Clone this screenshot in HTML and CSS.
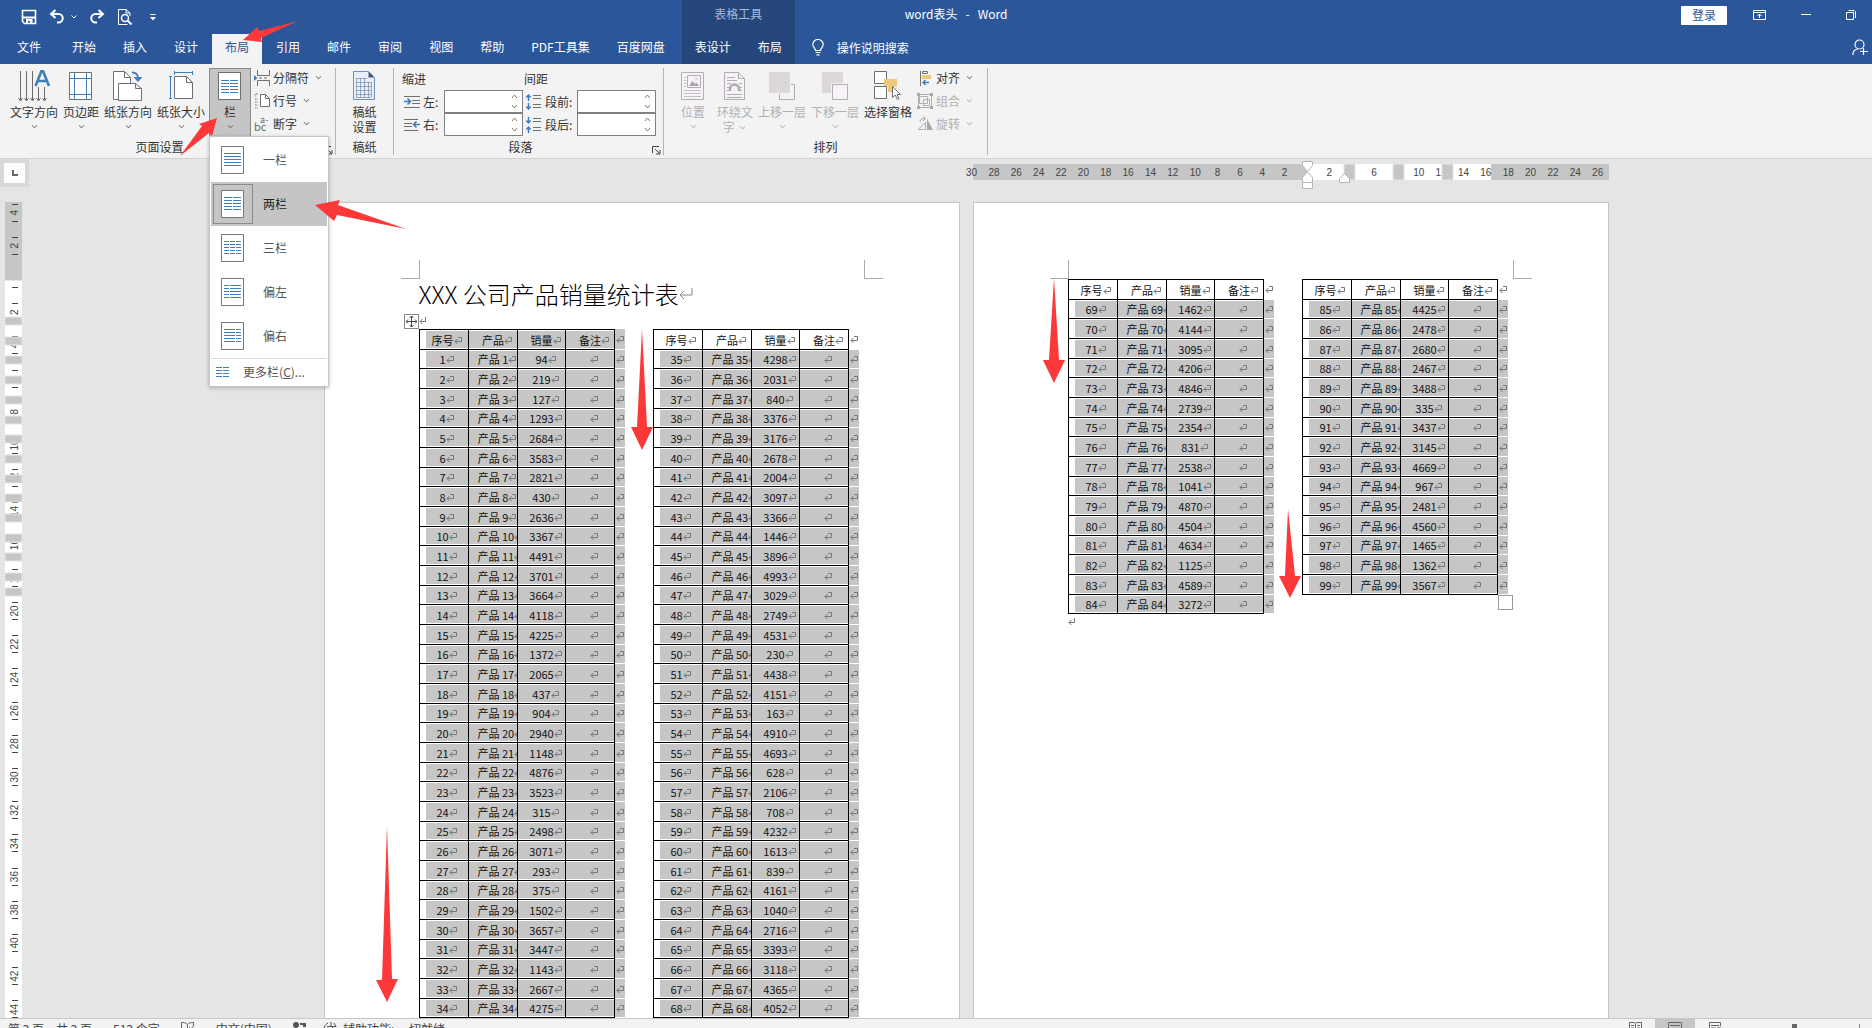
FILE: index.html
```
<!DOCTYPE html>
<html lang="zh-CN">
<head>
    <meta charset="UTF-8">
    <meta name="viewport" content="width=device-width, initial-scale=1.0">
    <title>word表头 - Word</title>
    <link rel="stylesheet" href="styles.css">
</head>
<body>

    <header class="topbar">
        <div class="top-main">
            <div class="quick-access">
                <button aria-label="保存"><svg width="16" height="16" viewBox="0 0 16 16"><path d="M1.5 1.5h13v13h-11l-2-2z" fill="none" stroke="#fff" stroke-width="1.6"/><path d="M2 7.5h12v2H2z" fill="#fff"/><path d="M5 10h6.500v5H9v-3H7v3H5z" fill="#fff"/></svg></button>
                <button class="undo" aria-label="撤消"><svg width="16" height="16" viewBox="0 0 16 16"><path d="M2 5h7.500a4 4 0 0 1 0 8.500H8" fill="none" stroke="#fff" stroke-width="2"/><path d="M6.500 1L2 5l4.500 4" fill="none" stroke="#fff" stroke-width="2"/></svg><svg width="6" height="4" viewBox="0 0 6 4"><path d="M.5.5L3 3 5.500.5" fill="none" stroke="#fff"/></svg></button>
                <button aria-label="恢复"><svg width="16" height="16" viewBox="0 0 16 16"><path d="M14 5H6.500a4 4 0 0 0 0 8.500H8" fill="none" stroke="#fff" stroke-width="2"/><path d="M9.500 1L14 5 9.500 9" fill="none" stroke="#fff" stroke-width="2"/></svg></button>
                <button aria-label="打印预览"><svg width="16" height="18" viewBox="0 0 16 18"><path d="M13 8V5L9 1.500H1.500v15h9M9 1.500V5h4" fill="none" stroke="#fff"/><circle cx="8" cy="10" r="3.500" fill="none" stroke="#fff" stroke-width="1.500"/><path d="M10.500 12.500l4 4" stroke="#fff" stroke-width="2"/></svg></button>
                <button class="more" aria-label="自定义快速访问工具栏"><svg width="6" height="7" viewBox="0 0 6 7"><path d="M.5.500h5" stroke="#fff"/><path d="M0 3h6L3 6.500z" fill="#fff"/></svg></button>
            </div>
            <nav class="tabs">
                <button class="tab file">文件</button>
                <button class="tab">开始</button>
                <button class="tab">插入</button>
                <button class="tab">设计</button>
                <button class="tab active">布局</button>
                <button class="tab">引用</button>
                <button class="tab">邮件</button>
                <button class="tab">审阅</button>
                <button class="tab">视图</button>
                <button class="tab">帮助</button>
                <button class="tab">PDF工具集</button>
                <button class="tab">百度网盘</button>
            </nav>
        </div>
        <div class="top-context">
            <div class="context-title">表格工具</div>
            <nav class="tabs">
                <button class="tab">表设计</button>
                <button class="tab">布局</button>
            </nav>
        </div>
        <div class="top-rest">
            <div class="window-row">
                <span class="window-title">word表头 &nbsp;&nbsp;- &nbsp;&nbsp;Word</span>
                <button class="login">登录</button>
                <button class="win" aria-label="功能区显示选项"><svg width="13" height="10" viewBox="0 0 13 10"><path d="M.5.5h12v9H.5zM.5 2.500h12" fill="none" stroke="#fff"/><path d="M6.500 8V4M4.500 6l2-2 2 2" fill="none" stroke="#fff"/></svg></button>
                <button class="win" aria-label="最小化"><svg width="10" height="10" viewBox="0 0 10 10"><path d="M0 4.500h10" stroke="#fff"/></svg></button>
                <button class="win" aria-label="还原"><svg width="10" height="10" viewBox="0 0 10 10"><path d="M.5 2.500h7v7h-7z" fill="none" stroke="#fff"/><path d="M2.500.5H8L9.500 2v6" fill="none" stroke="#fff"/></svg></button>
            </div>
            <div class="tell-row">
                <button class="tell">
                    <svg width="12" height="17" viewBox="0 0 12 17"><path d="M3.500 11.500C3.500 9 .8 8.500.8 5.500a5.200 5 0 0 1 10.400 0c0 3-2.700 3.500-2.700 6z" fill="none" stroke="#fff" stroke-width="1.200"/><path d="M3.500 13.500h5M4.500 15.800h3" stroke="#fff" stroke-width="1.200"/></svg>
                    操作说明搜索
                </button>
                <button class="share" aria-label="共享"><svg width="16" height="17" viewBox="0 0 16 17"><circle cx="7.500" cy="5.500" r="4.500" fill="none" stroke="#fff" stroke-width="1.200"/><path d="M.8 16c0-3.500 2-5.500 5-6" fill="none" stroke="#fff" stroke-width="1.200"/><path d="M8 12.500h8M11.500 9v7" stroke="#fff" stroke-width="1.200"/></svg></button>
            </div>
        </div>
    </header>

    <div class="ribbon">
        <section class="group setup">
            <div class="group-body">
                <button class="big">
                    <svg width="32" height="32" viewBox="0 0 32 32"><path d="M2.500 1v29M8.500 1v29M14.500 1v29M20.500 17v13M26.500 17v13" stroke="#6a6a6a"/><path d="M.5 28l2 3 2-3M6.500 28l2 3 2-3M12.500 28l2 3 2-3M18.500 28l2 3 2-3M24.500 28l2 3 2-3" fill="none" stroke="#6a6a6a"/><path d="M17.500 16L23.500 1h1.500l6 15M20 11h8.500" fill="none" stroke="#3f7dbb" stroke-width="2.600"/></svg>
                    <span>文字方向</span><i class="chev"></i>
                </button>
                <button class="big">
                    <svg width="24" height="32" viewBox="0 0 24 32"><path d="M.5 2.500h22v27H.5z" fill="#fff" stroke="#6f6f6f"/><path d="M5.500 3v26M17.500 3v26M1 8.500h21M1 24.500h21" stroke="#3f7dbb"/></svg>
                    <span>页边距</span><i class="chev"></i>
                </button>
                <button class="big">
                    <svg width="30" height="32" viewBox="0 0 30 32"><path d="M.5 1.500h11l6 6v22H.5z" fill="#fff" stroke="#6f6f6f"/><path d="M11.500 1.500v6h6" fill="none" stroke="#6f6f6f"/><path d="M5.500 13.500h17l6 5v12h-23z" fill="#fff" stroke="#6f6f6f"/><path d="M22.500 13.500v5h6" fill="none" stroke="#6f6f6f"/><path d="M19 2.500c5 0 6 2 6 6" fill="none" stroke="#3f7dbb" stroke-width="2"/><path d="M20.500 7l4.500 5 4.500-5z" fill="#3f7dbb"/></svg>
                    <span>纸张方向</span><i class="chev"></i>
                </button>
                <button class="big">
                    <svg width="24" height="32" viewBox="0 0 24 32"><path d="M5.500 6.500h12l6 6v16h-18z" fill="#fff" stroke="#6f6f6f"/><path d="M17.500 6.500v6h6" fill="none" stroke="#6f6f6f"/><path d="M5.500 2.500h18M5.500 1v4M23.500 1v4M1.500 6.500v22M0 6.500h3M0 28.500h3" stroke="#3f7dbb"/></svg>
                    <span>纸张大小</span><i class="chev"></i>
                </button>
                <div class="columns-menu">
                    <button class="big pressed">
                        <svg width="24" height="32" viewBox="0 0 24 32"><path d="M.5 2.500h22v27H.5z" fill="#fff" stroke="#6f6f6f"/><path d="M3 10.500h8m1 0h8M3 13.500h8m1 0h8M3 16.500h8m1 0h8M3 19.500h8m1 0h8M3 22.500h8m1 0h8" stroke="#3f7dbb"/></svg>
                        <span>栏</span><i class="chev"></i>
                    </button>
                    <div class="menu">
                        <button class="item"><span class="thumb"><svg width="24" height="28" viewBox="0 0 24 28"><path d="M.5.5h22v27H.5z" fill="#fff" stroke="#777"/><path d="M3 7.500h17M3 10.500h17M3 13.500h17M3 16.500h17M3 19.500h17" stroke="#3f7dbb"/></svg></span>一栏</button>
                        <button class="item selected"><span class="thumb"><svg width="24" height="28" viewBox="0 0 24 28"><path d="M.5.5h22v27H.5z" fill="#fff" stroke="#777"/><path d="M3 7.500h8m1 0h8M3 10.500h8m1 0h8M3 13.500h8m1 0h8M3 16.500h8m1 0h8M3 19.500h8m1 0h8" stroke="#3f7dbb"/></svg></span>两栏</button>
                        <button class="item"><span class="thumb"><svg width="24" height="28" viewBox="0 0 24 28"><path d="M.5.5h22v27H.5z" fill="#fff" stroke="#777"/><path d="M3 7.500h5m1 0h5m1 0h5M3 10.500h5m1 0h5m1 0h5M3 13.500h5m1 0h5m1 0h5M3 16.500h5m1 0h5m1 0h5M3 19.500h5m1 0h5m1 0h5" stroke="#3f7dbb"/></svg></span>三栏</button>
                        <button class="item"><span class="thumb"><svg width="24" height="28" viewBox="0 0 24 28"><path d="M.5.5h22v27H.5z" fill="#fff" stroke="#777"/><path d="M3 7.500h5m1 0h11M3 10.500h5m1 0h11M3 13.500h5m1 0h11M3 16.500h5m1 0h11M3 19.500h5m1 0h11" stroke="#3f7dbb"/></svg></span>偏左</button>
                        <button class="item"><span class="thumb"><svg width="24" height="28" viewBox="0 0 24 28"><path d="M.5.5h22v27H.5z" fill="#fff" stroke="#777"/><path d="M3 7.500h11m1 0h5M3 10.500h11m1 0h5M3 13.500h11m1 0h5M3 16.500h11m1 0h5M3 19.500h11m1 0h5" stroke="#3f7dbb"/></svg></span>偏右</button>
                        <button class="item more-cols"><svg width="14" height="11" viewBox="0 0 14 11"><path d="M0 .5h6m1 0h6M0 3.500h6m1 0h6M0 6.500h6m1 0h6M0 9.500h6m1 0h6" stroke="#3f7dbb"/></svg><span>更多栏(<u>C</u>)...</span></button>
                    </div>
                </div>
                <div class="small-list">
                    <button><svg width="16" height="16" viewBox="0 0 16 16"><path d="M3.500 0v5.500h12V0M3.500 16v-5.500h12V16" fill="none" stroke="#6f6f6f"/><path d="M0 5l3.500 3L0 11z" fill="#3f7dbb"/><path d="M5 8h3m2 0h3" stroke="#6f6f6f"/></svg>分隔符<i class="chev"></i></button>
                    <button><svg width="16" height="16" viewBox="0 0 16 16"><path d="M6.500 1.500h5l4 4v8h-9z" fill="#fff" stroke="#6f6f6f"/><path d="M11.500 1.500v4h4" fill="none" stroke="#6f6f6f"/><path d="M1 1v3M3.500 1h-2M1 6h3M1 9h3M1 12h3M1 15h3" stroke="#3f7dbb" stroke-dasharray="1.500 1"/></svg>行号<i class="chev"></i></button>
                    <button><span class="bc">bc<sup>a-</sup></span>断字<i class="chev"></i></button>
                </div>
            </div>
            <div class="group-name">页面设置<button class="launcher" aria-label="页面设置选项"><svg width="9" height="9" viewBox="0 0 9 9"><path d="M.5 7V.5H7M3 3l4.500 4.500M8 4v4H4" fill="none" stroke="#444"/></svg></button></div>
        </section>

        <section class="group paper">
            <div class="group-body">
                <button class="big">
                    <svg width="24" height="32" viewBox="0 0 24 32"><path d="M1.500 1.500h15l6 6v22h-21z" fill="#e6effb" stroke="#6f8fbe"/><path d="M16.500 1.500v6h6z" fill="#44597c"/><path d="M4 8.500h11M4 12.500h15M4 16.500h15M4 20.500h15M4 24.500h15M4.500 8v19M8.500 8v19M12.500 8v19M16.500 12v15M19.500 12v15M4 27.500h15" stroke="#8494ab" stroke-width=".8"/></svg>
                    <span>稿纸<br>设置</span>
                </button>
            </div>
            <div class="group-name">稿纸</div>
        </section>

        <section class="group paragraph">
            <div class="group-body fields">
                <span class="head">缩进</span>
                <span class="head">间距</span>
                <label for="indL"><svg width="16" height="14" viewBox="0 0 16 14"><path d="M0 1.500h16M8 5.500h8M8 8.500h8M0 12.500h16" stroke="#6f6f6f"/><path d="M0 6.500h6M3.500 3.500l3 3-3 3" fill="none" stroke="#3f7dbb" stroke-width="1.600"/></svg>左:</label>
                <span class="spin"><input type="text" id="indL"><i class="arrows"></i></span>
                <label for="spB"><svg width="16" height="16" viewBox="0 0 16 16"><path d="M7 1.500h8M7 4.500h8M7 10.500h8M7 13.500h8" stroke="#6f6f6f"/><path d="M2.500 7V1M.3 3.500L2.500 1l2.200 2.500M2.500 9v6M.3 12.500L2.500 15l2.200-2.500" fill="none" stroke="#3f7dbb" stroke-width="1.400"/></svg>段前:</label>
                <span class="spin"><input type="text" id="spB"><i class="arrows"></i></span>
                <label for="indR"><svg width="16" height="14" viewBox="0 0 16 14"><path d="M0 1.500h14M0 5.500h8M0 8.500h8M0 12.500h14" stroke="#6f6f6f"/><path d="M16 6.500h-6M12.500 3.500l-3 3 3 3" fill="none" stroke="#3f7dbb" stroke-width="1.600"/></svg>右:</label>
                <span class="spin"><input type="text" id="indR"><i class="arrows"></i></span>
                <label for="spA"><svg width="16" height="16" viewBox="0 0 16 16"><path d="M7 1.500h8M7 4.500h8M7 10.500h8M7 13.500h8" stroke="#6f6f6f"/><path d="M2.500 0v6M.3 3.500L2.500 6l2.200-2.500M2.500 16v-6M.3 12.500L2.500 10l2.200 2.500" fill="none" stroke="#3f7dbb" stroke-width="1.400"/></svg>段后:</label>
                <span class="spin"><input type="text" id="spA"><i class="arrows"></i></span>
            </div>
            <div class="group-name">段落<button class="launcher" aria-label="段落选项"><svg width="9" height="9" viewBox="0 0 9 9"><path d="M.5 7V.5H7M3 3l4.500 4.500M8 4v4H4" fill="none" stroke="#444"/></svg></button></div>
        </section>

        <section class="group arrange">
            <div class="group-body">
                <button class="big off pos">
                    <svg width="24" height="32" viewBox="0 0 24 32"><path d="M.5 2.500h22v27H.5z" fill="#f6f2f8" stroke="#b1afb1"/><path d="M6.500 5.500h13v12h-13z" fill="none" stroke="#b1afb1"/><path d="M8 16l3.500-5 2.500 3 1.500-1.500L18 16z" fill="#a9a7a9"/><circle cx="15.500" cy="9" r="1.500" fill="#ddd8dd"/><path d="M3 7.500h2M3 10.500h2M3 13.500h2M3 16.500h2M3 20.500h17M3 23.500h17M3 26.500h17" stroke="#c4c1c4"/></svg>
                    <span>位置</span><i class="chev"></i>
                </button>
                <button class="big off">
                    <svg width="22" height="32" viewBox="0 0 22 32"><path d="M.5 2.500h14l6 6v21H.5z" fill="#f6f2f8" stroke="#b1afb1"/><path d="M14.500 2.500v6h6" fill="none" stroke="#b1afb1"/><path d="M3 7.500h8M3 10.500h10M3 13.500h4m8 0h3M3 24.500h15M3 27.500h15M3 17.500h2M3 20.500h2M16 17.500h2M16 20.500h2" stroke="#b1afb1"/><path d="M6 21v-2a4.500 4.500 0 0 1 9 0v2" fill="none" stroke="#a9a7a9" stroke-width="2.400"/></svg>
                    <span>环绕文<br>字 <i class="chev"></i></span>
                </button>
                <button class="big off">
                    <svg width="28" height="32" viewBox="0 0 28 32"><path d="M11.500 14.500h15v15h-15z" fill="#f6f2f8" stroke="#b1afb1"/><path d="M0 1h23v23H0z" fill="#f3f3f3"/><path d="M1 2h21v21H1z" fill="#dbd7db"/></svg>
                    <span>上移一层</span><i class="chev"></i>
                </button>
                <button class="big off">
                    <svg width="28" height="32" viewBox="0 0 28 32"><path d="M1 2h21v21H1z" fill="#dbd7db"/><path d="M10 13h18v18H10z" fill="#f3f3f3"/><path d="M11.500 14.500h15v15h-15z" fill="#f6f2f8" stroke="#b1afb1"/></svg>
                    <span>下移一层</span><i class="chev"></i>
                </button>
                <button class="big">
                    <svg width="28" height="32" viewBox="0 0 28 32"><path d="M.5 1.500h12v12H.5zM.5 16.500h12v12H.5z" fill="#fff" stroke="#6f6f6f"/><path d="M10 9h13v8h-5v5h-4v-6h-4z" fill="#eec77c"/><path d="M18.500 16.500v11l2.800-2.500 2 4.500 1.700-.8-2-4.200h3.500z" fill="#fff" stroke="#6f6f6f"/></svg>
                    <span>选择窗格</span>
                </button>
                <div class="small-list">
                    <button><svg width="16" height="16" viewBox="0 0 16 16"><path d="M3.500 1v15" stroke="#6f6f6f"/><path d="M5.500 1.500h5v2h-5z" fill="#fff" stroke="#6f6f6f"/><path d="M5 5h9v4H5z" fill="#eec77c"/><path d="M12 12.500H6M8.500 10L6 12.500 8.500 15" fill="none" stroke="#3f7dbb" stroke-width="1.400"/></svg>对齐<i class="chev"></i></button>
                    <button class="off"><svg width="16" height="16" viewBox="0 0 16 16"><path d="M2.500 3.500h8v7h-8zM6.500 6.500h6v6h-6zM1.500 1.500h13v13h-13z" fill="none" stroke="#b1afb1"/><path d="M0 0h3v3H0zM13 0h3v3h-3zM0 13h3v3H0zM13 13h3v3h-3z" fill="#a9a7a9"/></svg>组合<i class="chev"></i></button>
                    <button class="off"><svg width="16" height="16" viewBox="0 0 16 16"><path d="M1 13.500h7.500v-7z" fill="none" stroke="#b1afb1"/><path d="M10 3l6 11h-6z" fill="#a9a7a9"/><path d="M3 6c0-3 2-3.500 5-3.500M6 0l2.500 2.500L6 5" fill="none" stroke="#a9a7a9"/></svg>旋转<i class="chev"></i></button>
                </div>
            </div>
            <div class="group-name">排列</div>
        </section>
    </div>

    <main class="workspace">
        <aside class="gutter">
            <button class="tab-stop" aria-label="制表符"><svg width="6" height="6" viewBox="0 0 6 6"><path d="M1 0v5h5" fill="none" stroke="#666" stroke-width="2"/></svg></button>
            <svg class="ruler-v" id="rulerV" width="17" height="830"></svg>
        </aside>
        <div class="canvas">
            <svg class="ruler-h" id="rulerH" width="636" height="28"></svg>

            <article class="page">
                <span class="crop left"></span><span class="crop right"></span>
                <h1>XXX 公司产品销量统计表<svg width="14" height="14" viewBox="0 0 14 14"><path d="M13 1v7H1M5 4L1 8l4 4" fill="none" stroke="#888"/></svg></h1>
                <p class="empty"><i class="para"></i><span class="anchor"><svg width="11" height="11" viewBox="0 0 11 11"><path d="M5.500 0v11M0 5.500h11M3.500 2l2-2 2 2M3.500 9l2 2 2-2M2 3.500l-2 2 2 2M9 3.500l2 2-2 2" fill="none" stroke="#444"/></svg></span></p>
                <div class="text-columns">
                    <table class="sales picked" data-from="1" data-to="34"></table>
                    <table class="sales" data-from="35" data-to="68"></table>
                </div>
            </article>

            <article class="page">
                <span class="crop left"></span><span class="crop right"></span>
                <div class="text-columns">
                    <div>
                        <table class="sales" data-from="69" data-to="84"></table>
                        <p class="empty"><i class="para"></i></p>
                    </div>
                    <div class="last">
                        <table class="sales" data-from="85" data-to="99"></table>
                        <span class="resize"></span>
                    </div>
                </div>
            </article>
        </div>
    </main>

    <footer class="status">
        <span>第 2 页，共 2 页</span>
        <span>512 个字</span>
        <svg width="14" height="12" viewBox="0 0 14 12"><path d="M6.500 2.500C5 .5 2.500.5.5.5v10c3 0 5 0 6 1.500 1-1.500 3-1.500 6-1.500M6.500 2.500C8 .5 10.500.5 12.500.5v3M6.500 2.500V12M8 5l2 2 3-4" fill="none" stroke="#666"/></svg>
        <span>中文(中国)</span>
        <svg width="14" height="12" viewBox="0 0 14 12"><circle cx="3" cy="3" r="3" fill="#555"/><path d="M7 1h6v4h-3v-2H7z" fill="#555"/><path d="M0 8h13v4H0z" fill="#555"/></svg>
        <span class="access"><svg width="15" height="12" viewBox="0 0 15 12"><path d="M5 1C1 3 0 7 2 11M8 0v4l3 3M4 4.500h9M11 1l2 3.500" fill="none" stroke="#555"/></svg>辅助功能: 一切就绪</span>
        <div class="views">
            <button aria-label="阅读视图"><svg width="13" height="10" viewBox="0 0 13 10"><path d="M.5 10V.5h5l1 1 1-1h5V10M6.500 1v9M2 3.500h3M8 3.500h3M2 6h3M8 6h3" fill="none" stroke="#666"/></svg></button>
            <button class="on" aria-label="页面视图"><svg width="14" height="10" viewBox="0 0 14 10"><path d="M.5 10V.5h13V10M2 3.500h10M2 6.500h10" fill="none" stroke="#666"/></svg></button>
            <button aria-label="Web 版式视图"><svg width="13" height="10" viewBox="0 0 13 10"><path d="M.5 10V.5h11V4M2 3.500h8M2 6h5" fill="none" stroke="#666"/><circle cx="10" cy="7" r="2.500" fill="#aaa"/></svg></button>
            <input type="range" aria-label="显示比例" min="0" max="100" value="49">
            <button class="zoom-in" aria-label="放大"><svg width="11" height="11" viewBox="0 0 11 11"><path d="M5.500 0v11M0 5.500h11" stroke="#888"/></svg></button>
        </div>
    </footer>

    <svg class="arrows-layer" aria-hidden="true">
        <path d="M243 40L257 27l2 4 39-10-37 17 1 4z"/>
        <path d="M217 118l-18 6 3 2-22 30 29-23 3 3z"/>
        <path d="M315 205l25-5-2 5 68 24-69-14-3 6z"/>
        <path d="M642 329l5 98h6l-11 23-11-23h6z"/>
        <path d="M1054 278l5 82h6l-11 23-11-23h6z"/>
        <path d="M1288 509l7 67h6l-11 22-11-22h6z"/>
        <path d="M387 826l5 153h6l-11 23-11-22h6z"/>
    </svg>

    <script src="script.js"></script>
</body>
</html>
```
FILE: styles.css
```
* {
    box-sizing: border-box;
}

body {
    margin: 0;
    height: 100vh;
    display: flex;
    flex-direction: column;
    overflow: hidden;
    background: #e5e5e5;
    color: #333;
    font-family: "Noto Sans CJK SC", sans-serif;
    font-size: 12px;
    line-height: 16px;
}

button {
    border: none;
    padding: 0;
    background: none;
    color: inherit;
    font: inherit;
    white-space: nowrap;
}

svg {
    display: block;
    flex: none;
}

/* title bar and tabs */
.topbar {
    display: flex;
    flex: none;
    background: #2b579a;
    color: #fff;
}

.quick-access {
    display: flex;
    align-items: center;
    height: 34px;
    padding-left: 21px;
    gap: 12px;
}

.quick-access .undo {
    display: flex;
    align-items: center;
    gap: 6px;
}

.quick-access .more {
    margin-left: 5px;
}

.tabs {
    display: flex;
    height: 30px;
    gap: 1px;
}

.tab {
    padding: 0 13px 4px;
}

.tab.file {
    padding: 0 17px 4px;
}

.tab.active {
    background: #f3f3f3;
    color: #2b579a;
}

.top-context {
    margin-left: 4px;
    background: #24467b;
}

.context-title {
    height: 34px;
    line-height: 28px;
    text-align: center;
    color: #a5b9d8;
}

.top-rest {
    flex: 1;
}

.window-row {
    display: flex;
    align-items: center;
    height: 30px;
    margin-bottom: 4px;
    padding-left: 110px;
    padding-right: 16px;
}

.window-title {
    margin-right: auto;
    padding-bottom: 2px;
}

.login {
    width: 46px;
    height: 19px;
    margin-right: 26px;
    background: #fff;
    border-radius: 1px;
    color: #2b579a;
}

.win {
    margin-right: 35px;
}

.win:last-child {
    margin-right: 0;
}

.tell-row {
    display: flex;
    align-items: center;
    justify-content: space-between;
    height: 30px;
    padding: 0 4px 3px 17px;
}

.tell {
    display: flex;
    align-items: center;
    gap: 13px;
}

/* ribbon */
.ribbon {
    display: flex;
    flex: none;
    background: #f3f3f3;
    border-bottom: 1px solid #d2d2d2;
    padding: 3px 0;
}

.group {
    display: flex;
    flex-direction: column;
    border-right: 1px solid #b5b5b5;
    margin: 1px 0 0;
}

.group-body {
    display: flex;
    gap: 1px;
    height: 71px;
}

.group-name {
    position: relative;
    text-align: center;
    height: 16px;
}

.launcher {
    position: absolute;
    right: 2px;
    bottom: 0;
}

.setup .group-body {
    padding-left: 8px;
}

.setup {
    width: 336px;
}

.setup .group-name {
    padding-right: 16px;
}

.big {
    display: flex;
    flex-direction: column;
    align-items: center;
    height: 70px;
    padding: 2px 2px 0;
    line-height: 15px;
}

.big > span {
    margin-top: 2px;
}

.big > .chev {
    margin-top: 4px;
}

.chev {
    display: inline-block;
    width: 5px;
    height: 5px;
    margin: 0 2px 3px 3px;
    border: solid #666;
    border-width: 0 1px 1px 0;
    transform: rotate(45deg) scale(0.8);
    flex: none;
}

.off {
    color: #b1afb1;
}

.off .chev {
    border-color: #b1afb1;
}

.columns-menu {
    position: relative;
    margin-left: 1px;
}

.big.pressed {
    width: 42px;
    background: #c5c5c5;
    border: 1px solid #8a8a8a;
    padding-top: 1px;
}

.small-list {
    display: flex;
    flex-direction: column;
    gap: 7px;
    padding: 2px 0 0 2px;
}

.small-list button {
    display: flex;
    align-items: center;
    gap: 3px;
}

.small-list .chev {
    margin-left: 4px;
}

.bc {
    position: relative;
    width: 16px;
    padding-top: 4px;
    font-size: 11px;
    line-height: 12px;
    text-align: left;
    color: #666;
}

.bc sup {
    position: absolute;
    top: 0;
    left: 6px;
    font-size: 9px;
    line-height: 8px;
}

.menu {
    position: absolute;
    z-index: 5;
    top: 68px;
    left: 0;
    width: 120px;
    padding: 1px;
    background: #fff;
    border: 1px solid #c6c6c6;
    box-shadow: 0 1px 4px rgba(0, 0, 0, 0.25);
}

.item {
    display: flex;
    align-items: center;
    width: 100%;
    height: 44px;
    gap: 10px;
    padding-left: 2px;
    color: #555;
}

.thumb {
    display: flex;
    align-items: center;
    justify-content: center;
    width: 40px;
    height: 40px;
    border: 1px solid transparent;
}

.item.selected {
    background: #c5c5c5;
    color: #222;
}

.selected .thumb {
    border-color: #8a8a8a;
}

.item.more-cols {
    height: 27px;
    padding-left: 5px;
    gap: 13px;
    border-top: 1px solid #dcdcdc;
}

.paper {
    width: 58px;
}

.paper .group-body {
    justify-content: center;
}

.paragraph {
    width: 270px;
}

.paragraph .group-name {
    padding-right: 16px;
}

.fields {
    display: grid;
    grid-template-columns: 41px 79px 52px 79px;
    grid-template-rows: 22px 23px 23px;
    align-items: center;
    column-gap: 1px;
    row-gap: 0;
    padding-left: 8px;
}

.fields .head {
    grid-column: span 2;
}

.fields label {
    display: flex;
    align-items: center;
    gap: 3px;
    padding-left: 2px;
    white-space: nowrap;
}

.spin {
    position: relative;
    height: 23px;
}

.spin input {
    width: 100%;
    height: 100%;
    border: 1px solid #808080;
    background: #fff;
}

.arrows {
    position: absolute;
    right: 5px;
    top: 4px;
    width: 7px;
    height: 15px;
    background: url("data:image/svg+xml,%3Csvg xmlns='http://www.w3.org/2000/svg' width='7' height='15'%3E%3Cpath d='M1 4l2.500-3L6 4M1 11l2.500 3L6 11' fill='none' stroke='%23777'/%3E%3C/svg%3E") no-repeat;
}

.arrange {
    width: 324px;
}

.arrange .group-body {
    padding-left: 13px;
}

.arrange .pos {
    width: 32px;
    margin-right: 5px;
}

/* document area */
.workspace {
    flex: 1;
    min-height: 0;
    display: flex;
    overflow: hidden;
}

.gutter {
    width: 60px;
    flex: none;
}

.tab-stop {
    display: grid;
    place-items: center;
    width: 29px;
    height: 28px;
    margin-bottom: 15px;
    border: 4px solid #d9d9d9;
    background: #fdfdfd;
}

.ruler-v {
    margin-left: 5px;
}

.ruler-h,
.ruler-v {
    font-family: "Liberation Sans", sans-serif;
    font-size: 10px;
    fill: #444;
    text-anchor: middle;
    overflow: visible;
}

.canvas {
    flex: 1;
    display: grid;
    grid-template-columns: 636px 636px;
    grid-template-rows: 43px auto;
    column-gap: 13px;
    justify-content: center;
    align-items: start;
}

.ruler-h {
    grid-column: 2;
    margin-top: 2px;
}

.page {
    position: relative;
    aspect-ratio: 210 / 297;
    padding: 76px 94px 0;
    background: #fff;
    border: 1px solid #c6c6c6;
}

.crop {
    position: absolute;
    top: 57px;
    width: 19px;
    height: 19px;
    border: solid #aaa;
}

.crop.left {
    left: 76px;
    border-width: 0 1px 1px 0;
}

.crop.right {
    right: 76px;
    border-width: 0 0 1px 1px;
}

h1 {
    display: flex;
    align-items: center;
    height: 34px;
    margin: 0;
    font-size: 24px;
    font-weight: 300;
    line-height: 30px;
    padding-bottom: 4px;
    color: #000;
}

.empty {
    position: relative;
    height: 16px;
    margin: 0;
}

.para {
    display: inline-block;
    width: 8px;
    height: 9px;
    background: url("data:image/svg+xml,%3Csvg xmlns='http://www.w3.org/2000/svg' width='8' height='9'%3E%3Cpath d='M6.500 0v4.500H1M3.500 2L1 4.500 3.500 7' fill='none' stroke='%23777'/%3E%3C/svg%3E") no-repeat;
}

.anchor {
    position: absolute;
    left: -15px;
    top: 1px;
    padding: 1px;
    border: 1px solid #888;
    background: #fff;
}

.text-columns {
    display: flex;
    align-items: flex-start;
    gap: 28px;
}

.sales {
    width: 206px;
    flex: none;
    table-layout: fixed;
    border-collapse: separate;
    border-spacing: 0;
    color: #111;
    font-size: 11px;
    line-height: 16px;
}

.sales tr {
    height: 20px;
}

.sales tr:nth-child(3n+2) {
    height: 19px;
}

.sales tr:first-child {
    height: 21px;
}

.sales td,
.sales th {
    padding: 1px 0;
    border: solid #000;
    border-width: 0 1px 1px 0;
    overflow: hidden;
    white-space: nowrap;
    text-align: center;
    text-indent: 9px;
    font-weight: 400;
    background: #c6c6c6;
    background-clip: content-box;
}

.sales tr > :first-child {
    width: 50px;
    padding-left: 6px;
    border-left-width: 1px;
    text-indent: 0;
}

.sales tr > :nth-child(2) {
    width: 49px;
}

.sales tr > :nth-child(3) {
    width: 48px;
}

.sales tr > :nth-child(4) {
    width: 49px;
}

.sales tr > :nth-child(5) {
    width: 10px;
    padding: 0 0 1px;
    border-width: 0;
    text-indent: 0;
}

.sales th {
    border-top-width: 1px;
    background: none;
}

.picked th {
    background: #c6c6c6;
    background-clip: content-box;
}

/* end-of-cell mark */
.sales td::after,
.sales th::after {
    content: "";
    display: inline-block;
    width: 8px;
    height: 8px;
    background: url("data:image/svg+xml,%3Csvg xmlns='http://www.w3.org/2000/svg' width='8' height='8'%3E%3Cpath d='M4 .5h3.500v4H1M3.500 2L1 4.500 3.500 7' fill='none' stroke='%23777'/%3E%3C/svg%3E") no-repeat;
}

.last {
    position: relative;
}

.resize {
    position: absolute;
    right: -5px;
    bottom: -15px;
    width: 15px;
    height: 15px;
    border: 1px solid #999;
    background: #fff;
}

/* status bar */
.status {
    flex: none;
    display: flex;
    align-items: flex-start;
    gap: 21px;
    height: 10px;
    padding: 3px 0 0 8px;
    overflow: hidden;
    background: #f3f3f3;
    border-top: 1px solid #c6c6c6;
    color: #444;
}

.status > span {
    line-height: 14px;
}

.access {
    display: flex;
    gap: 5px;
    margin-left: -5px;
}

.views {
    display: flex;
    margin: -3px 0 0 auto;
    height: 22px;
}

.views button {
    display: flex;
    justify-content: center;
    width: 40px;
    padding-top: 3px;
}

.views .on {
    background: #c6c6c6;
}

.views input {
    appearance: none;
    width: 100px;
    height: 22px;
    margin: 0 0 0 10px;
    background: none;
}

.views input::-webkit-slider-thumb {
    appearance: none;
    width: 5px;
    height: 12px;
    background: #666;
}

.views .zoom-in {
    width: 25px;
    margin-left: 2px;
    padding-top: 5px;
}

/* red pointers drawn over the window */
.arrows-layer {
    position: absolute;
    z-index: 10;
    top: 0;
    left: 0;
    width: 100%;
    height: 100%;
    fill: #fc3838;
    pointer-events: none;
}
```
FILE: script.js
```
// sales per product, product 1 first
const sales = [
    94, 219, 127, 1293, 2684, 3583, 2821, 430, 2636, 3367,
    4491, 3701, 3664, 4118, 4225, 1372, 2065, 437, 904, 2940,
    1148, 4876, 3523, 315, 2498, 3071, 293, 375, 1502, 3657,
    3447, 1143, 2667, 4275, 4298, 2031, 840, 3376, 3176, 2678,
    2004, 3097, 3366, 1446, 3896, 4993, 3029, 2749, 4531, 230,
    4438, 4151, 163, 4910, 4693, 628, 2106, 708, 4232, 1613,
    839, 4161, 1040, 2716, 3393, 3118, 4365, 4052, 1462, 4144,
    3095, 4206, 4846, 2739, 2354, 831, 2538, 1041, 4870, 4504,
    4634, 1125, 4589, 3272, 4425, 2478, 2680, 2467, 3488, 335,
    3437, 3145, 4669, 967, 2481, 4560, 1465, 1362, 3567
];

document.querySelectorAll(".sales").forEach((table) => {
    let rows = "<tr><th>序号</th><th>产品</th><th>销量</th><th>备注</th><td class='mark'></td></tr>";
    for (let i = Number(table.dataset.from); i <= Number(table.dataset.to); i++) {
        rows += `<tr><td>${i}</td><td>产品 ${i}</td><td>${sales[i - 1]}</td><td></td><td></td></tr>`;
    }
    table.innerHTML = rows;
    if (!table.classList.contains("picked")) {
        table.querySelector(".mark").style.backgroundColor = "transparent";
    }
});

// horizontal ruler, zero at the left margin of the page
let h = "<rect x='0' y='3' width='636' height='16' fill='#c6c6c6'/><rect x='334' y='3' width='184' height='16' fill='#fff'/>";
for (let n = -30; n <= 26; n += 2) {
    if (n !== 0) {
        h += `<text x='${334 + n * 11.18}' y='15'>${Math.abs(n)}</text>`;
    }
}
[[371, 11], [420, 11], [469, 11]].forEach(([x, w]) => {
    h += `<rect x='${x}' y='3' width='${w}' height='16' fill='#c6c6c6' stroke='#e5e5e5'/>`;
});
h += "<path d='M329.500.500h10v4l-5 6-5-6zM334.500 10.500l5 6v5h-10v-5zM329.500 21.500h10v6h-10zM371.500 12.500l5 5v4h-10v-4z' fill='#fff' stroke='#b5b5b5'/>";
document.getElementById("rulerH").innerHTML = h;

// vertical ruler, table rows show as grey bars
let v = "<rect width='17' height='830' fill='#fff'/><rect width='17' height='79' fill='#c6c6c6'/>";
for (let n = -4; n <= 46; n += 2) {
    let y = 77 + n * 16.6;
    if (n !== 0) {
        v += `<text transform='translate(13 ${y}) rotate(-90)'>${Math.abs(n)}</text>`;
    }
    v += `<path d='M7 ${Math.round(y + 8) + 0.5}h6' stroke='#444'/>`;
    if (n !== 0) {
        v += `<path d='M7 ${Math.round(y - 9) + 0.5}h6' stroke='#444'/>`;
    }
}
v += "<rect y='78' width='17' height='1' fill='#e5e5e5'/>";
[115, 135, 154, 174, 194, 214, 233, 253, 273, 292, 312, 332, 351, 371, 386].forEach((y) => {
    v += `<rect x='0' y='${y}' width='17' height='8' fill='#c6c6c6' stroke='#e5e5e5'/>`;
});
document.getElementById("rulerV").innerHTML = v;
```
